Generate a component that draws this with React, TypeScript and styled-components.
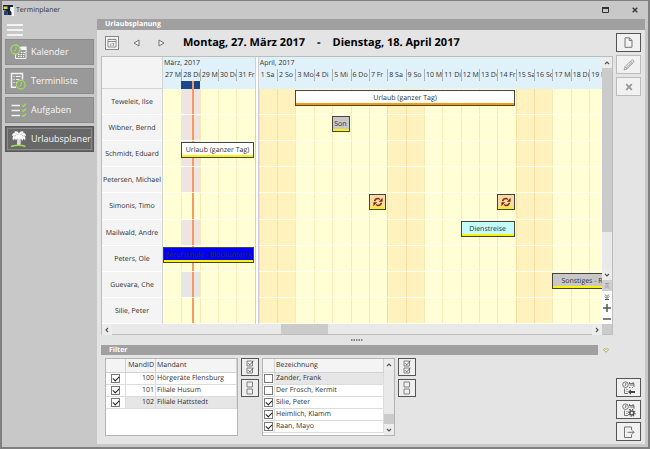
import React from "react";
import styled, { createGlobalStyle, css } from "styled-components";

const GlobalStyle = createGlobalStyle`
  * { box-sizing: border-box; }
  html, body, #root { height: 100%; margin: 0; }
  body { font: 7px/14px "Open Sans", "Noto Sans", sans-serif; color: #303030; overflow: hidden; text-rendering: geometricPrecision; }
  button { font: inherit; color: inherit; padding: 0; margin: 0; border: 0; background: none; }
  svg { display: block; flex: none; }
`;

/* ---------- window frame ---------- */

const Window = styled.div`
  display: flex;
  flex-direction: column;
  height: 100vh;
  background: #c8c8c8;
  border: 2px solid #808080;
  border-top-width: 1px;
`;

const TitleBar = styled.header`
  display: flex;
  align-items: center;
  height: 18px;
  flex: none;
  padding: 0 7px 0 1px;
  gap: 2px;
`;

const WindowTitle = styled.h1`
  flex: 1;
  margin: 0;
  padding-top: 2px;
  font-size: 7px;
  font-weight: 400;
`;

const WindowButton = styled.button`
  display: grid;
  place-items: center;
  width: 12px;
  height: 14px;
  margin-left: 16px;
`;

const Body = styled.div`
  display: flex;
  flex: 1;
  min-height: 0;
  padding: 0 3px 3px;
  gap: 3px;
`;

/* ---------- side navigation ---------- */

const Sidebar = styled.nav`
  display: flex;
  flex-direction: column;
  width: 89px;
  flex: none;
  gap: 3px;
`;

const MenuButton = styled.button`
  height: 17px;
  padding: 4px 0 0 2px;
  text-align: left;
`;

const NavButton = styled.button<{ $active?: boolean }>`
  display: flex;
  align-items: center;
  gap: 3px;
  height: 26px;
  padding-left: 4px;
  font-size: 9px;
  color: #f6f6f6;
  background: ${(p) => (p.$active ? "#686868" : "#999")};
  border: 1px solid ${(p) => (p.$active ? "#585858" : "#8c8c8c")};
  ${(p) =>
    p.$active &&
    css`
      outline: 1px solid #8a8a8a;
      outline-offset: -3px;
    `}
`;

/* ---------- content ---------- */

const Content = styled.main`
  display: flex;
  flex-direction: column;
  flex: 1;
  min-width: 0;
  background: #e4e4e4;
`;

const SectionBar = styled.h2`
  margin: 0;
  height: 11px;
  flex: none;
  padding-left: 8px;
  font-size: 7px;
  line-height: 12px;
  font-weight: 700;
  color: #fff;
  background: #a0a0a0;
`;

const Columns = styled.div`
  display: flex;
  flex: 1;
  min-height: 0;
  padding: 0 4px 3px;
  gap: 3px;
`;

const MainColumn = styled.div`
  display: flex;
  flex-direction: column;
  flex: 1;
  min-width: 0;
`;

const Actions = styled.aside`
  display: flex;
  flex-direction: column;
  width: 25px;
  flex: none;
  gap: 3px;
  padding-top: 3px;
`;

const Spacer = styled.div`
  flex: 1;
`;

const ActionButton = styled.button<{ $dim?: boolean }>`
  display: grid;
  place-items: center;
  height: 19px;
  background: #f1f1f1;
  border: 1px solid ${(p) => (p.$dim ? "#bcbcbc" : "#555")};
`;

const Toolbar = styled.div`
  display: flex;
  align-items: center;
  height: 26px;
  flex: none;
  padding-left: 4px;
`;

const CalendarButton = styled.button`
  display: grid;
  place-items: center;
  width: 14px;
  height: 14px;
  margin-right: 5px;
  background: #f3f3f3;
  border: 1px solid #888;
`;

const StepButton = styled.button`
  display: grid;
  place-items: center;
  width: 25px;
  height: 14px;
`;

const Period = styled.div`
  display: flex;
  gap: 12px;
  margin-left: 9px;
  font-size: 11px;
  line-height: 16px;
  font-weight: 700;
  color: #000;
  white-space: nowrap;
`;

/* ---------- schedule ---------- */

const Schedule = styled.section`
  display: grid;
  grid-template: minmax(0, 1fr) 10px / minmax(0, 1fr) 10px;
  flex: 1;
  min-height: 0;
  border: 1px solid #bdbdbd;
`;

const Planner = styled.div`
  display: flex;
  min-width: 0;
  background: #fffed5;
`;

const Column = styled.div<{ $grow?: number }>`
  display: flex;
  flex-direction: column;
  flex: ${(p) => p.$grow ?? 0} 0 0;
  min-width: 0;
  overflow: hidden;
`;

const ResourceColumn = styled.div`
  display: flex;
  flex-direction: column;
  width: 61px;
  flex: none;
  background: #f4f4f4;
  border-right: 1px solid #d4d4d4;
`;

const ResourceHead = styled.div`
  height: 32px;
  flex: none;
  border-bottom: 1px solid #d4d4d4;
`;

const Divider = styled.div`
  width: 4px;
  flex: none;
  background: #fff;
  border: solid #cfcfd8;
  border-width: 0 1px;
`;

const Rows = styled.div`
  display: grid;
  grid-template-rows: repeat(9, minmax(0, 1fr));
  flex: 1;
  min-height: 0;
`;

const Resource = styled.div`
  display: grid;
  place-items: center;
  padding-top: 3px;
  border-bottom: 1px solid #fff;
  white-space: nowrap;
`;

const MonthHead = styled.div`
  display: flex;
  flex-direction: column;
  height: 32px;
  flex: none;
  background: #e0f1fa;
`;

const MonthName = styled.div`
  height: 12px;
  padding-left: 1px;
`;

const DayGrid = styled.div<{ $columns: string }>`
  display: grid;
  grid-template-columns: ${(p) => p.$columns};
  grid-template-rows: minmax(0, 1fr);
  flex: 1;
  min-height: 0;
`;

const DayHead = styled.div`
  min-width: 0;
  display: flex;
  flex-direction: column;
`;

const DayLabel = styled.div<{ $first: boolean }>`
  height: 12px;
  padding-left: 1px;
  overflow: hidden;
  white-space: nowrap;
  border-left: 1px solid ${(p) => (p.$first ? "transparent" : "#a9b4ba")};
`;

const TodayMark = styled.div`
  flex: 1;
  padding-left: 11px;
  background: #1b468c;
`;

const NowLine = styled.div`
  width: 2px;
  height: 100%;
  background: #f79a62;
`;

const Lane = styled(DayGrid)`
  border-bottom: 1px solid #fffef3;
`;

const Cell = styled.div<{ $day: number; $weekend?: boolean; $busy?: string }>`
  grid-row: 1;
  grid-column: ${(p) => p.$day};
  background: ${(p) => p.$busy ?? (p.$weekend ? "#fff2bd" : "#fffed5")};
  border-left: 1px solid ${(p) => (p.$weekend ? "#f5dda4" : p.$day === 1 ? "transparent" : "#fbe8b8")};
`;

const NowCell = styled(Cell)`
  padding-left: 10px;
`;

const Event = styled.div<{ $from: number; $to: number; $fill: string; $strip: string; $align?: string; $open?: boolean }>`
  grid-row: 1;
  grid-column: ${(p) => p.$from} / ${(p) => p.$to};
  z-index: 1;
  display: flex;
  justify-content: ${(p) => p.$align ?? "center"};
  height: 16px;
  margin: 1px ${(p) => (p.$open ? 0 : 1)}px 0 0;
  padding: 0 ${(p) => (p.$open ? 0 : 1)}px 0 ${(p) => (p.$open ? 8 : 1)}px;
  overflow: hidden;
  white-space: nowrap;
  line-height: 16px;
  background: linear-gradient(to top, ${(p) => p.$strip} 2px, ${(p) => p.$fill} 2px);
  border: 1px solid #45453c;
  ${(p) => p.$open && "border-right: 0;"}
  svg {
    margin-top: 2px;
  }
`;

const EventText = styled.span<{ $clip?: boolean }>`
  ${(p) => p.$clip && "flex: 1; min-width: 0; overflow: hidden;"}
`;

const ScrollTrack = styled.div`
  display: flex;
  flex-direction: column;
  background: #e9e9e9;
`;

const ScrollTrackRow = styled.div`
  display: flex;
  background: #e9e9e9;
`;

const ScrollButton = styled.button<{ $bg?: string }>`
  display: grid;
  place-items: center;
  min-width: 10px;
  height: 11px;
  flex: none;
  background: ${(p) => p.$bg ?? "#ececec"};
`;

const Gap = styled.div<{ $grow: number }>`
  flex: ${(p) => p.$grow} 0 0;
`;

const Thumb = styled.div<{ $grow: number }>`
  flex: ${(p) => p.$grow} 0 0;
  background: #cbcbcb;
`;

const Corner = styled.div`
  background: #cbcbcb;
`;

const Splitter = styled.div`
  display: grid;
  place-items: center;
  height: 10px;
  flex: none;
`;

/* ---------- filter ---------- */

const FilterHead = styled.div`
  display: flex;
  align-items: center;
  flex: none;
`;

const FilterBar = styled(SectionBar)`
  flex: 1;
  height: 10px;
`;

const CollapseButton = styled.button`
  display: grid;
  place-items: center;
  width: 15px;
  height: 10px;
`;

const FilterBody = styled.div`
  display: flex;
  align-items: flex-start;
  flex: none;
  height: 86px;
  padding: 3px 4px 0;
`;

const ListBox = styled.div`
  display: flex;
  width: 133px;
  height: 78px;
  background: #fff;
  border: 1px solid #b4b4b4;
`;

const Table = styled.table`
  flex: 1;
  align-self: flex-start;
  border-collapse: separate;
  border-spacing: 0;
  table-layout: fixed;
  width: 100%;
`;

const Th = styled.th<{ $width?: number; $right?: boolean }>`
  width: ${(p) => (p.$width ? `${p.$width}px` : "auto")};
  height: 14px;
  padding: 0 1px;
  font-weight: 400;
  line-height: 13px;
  text-align: ${(p) => (p.$right ? "right" : "left")};
  background: #f4f4f4;
  border: solid #d2d2d2;
  border-width: 0 1px 1px 0;
`;

const Td = styled.td<{ $right?: boolean; $selected?: boolean }>`
  height: 12px;
  padding: 0 1px;
  line-height: 11px;
  white-space: nowrap;
  text-align: ${(p) => (p.$right ? "right" : "left")};
  background: ${(p) => (p.$selected ? "#e6e6e6" : "#fff")};
  border: solid #dcdcdc;
  border-width: 0 1px 1px 0;
`;

const CheckTd = styled(Td)`
  background: #fff;
`;

const Check = styled.input`
  appearance: none;
  display: grid;
  place-items: center;
  width: 9px;
  height: 9px;
  margin: 0 auto;
  background: #fff;
  border: 1px solid #777;
  &:checked::after {
    content: "";
    width: 5px;
    height: 3px;
    margin-top: -1px;
    border: solid #222;
    border-width: 0 0 1px 1px;
    transform: rotate(-45deg);
  }
`;

const ToggleStack = styled.div`
  display: flex;
  flex-direction: column;
  gap: 3px;
  margin: 0 3px;
`;

const ToggleButton = styled.button`
  display: grid;
  place-items: center;
  width: 18px;
  height: 18px;
  background: #efefef;
  border: 1px solid #555;
`;

/* ---------- icons ---------- */

const green = "#9fdc5a";

const LogoIcon = () => (
  <svg width="11" height="11" viewBox="0 0 11 11">
    <path d="M0 0h10v2H7.500L7 5l1.500 2v3H5L4 6 0 5z" fill="#10233f" />
    <path d="M.500 1.500h4V4h-4z" fill="#e6cf3c" />
    <path d="M7.500 2H11v9H8.500L9 8 7 5z" fill="#f8f8f8" />
    <path d="M1 6h3l1 4H1z" fill="#27406b" />
  </svg>
);

const Hamburger = () => (
  <svg width="16" height="12" viewBox="0 0 16 12" stroke="#fff" strokeWidth="1.400">
    <path d="M0 1h16M0 6h16M0 11h16" />
  </svg>
);

const CalendarNavIcon = () => (
  <svg width="18" height="16" viewBox="0 0 18 16" fill="none">
    <path d="M10 3.500h6v11H5.500v-4" stroke="#f4f4f4" />
    <path d="M10.500 2.500h6v3.500h-6z" fill="#f4f4f4" />
    <path d="M11 8.500h4.500M8 10.500h7.500M8 12.500h6" stroke="#f4f4f4" strokeDasharray="1.500 1" />
    <circle cx="5.500" cy="5.500" r="4.500" stroke={green} strokeWidth="1.300" />
    <path d="M6 2.500v3.500L4 7.500" stroke={green} />
  </svg>
);

const ListNavIcon = () => (
  <svg width="18" height="18" viewBox="0 0 18 18" fill="none">
    <path d="M6 15.200H1.500V1.500h11v6" stroke="#f4f4f4" strokeWidth="1.500" />
    <path d="M3.500 4.500h1.200M3.500 7.500h1.200M3.500 10.500h1.200M6 4.500h4.500M6 7.500h3.500M6 10.500h1" stroke="#f4f4f4" />
    <circle cx="10.800" cy="12.700" r="4.300" stroke={green} strokeWidth="1.300" />
    <path d="M11.300 10v3L9.300 14.500" stroke={green} />
  </svg>
);

const TasksNavIcon = () => (
  <svg width="18" height="14" viewBox="0 0 18 14" fill="none">
    <path d="M1.500 2.500H10M1.500 7.500H10M1.500 12.500H10" stroke="#f4f4f4" strokeWidth="1.300" />
    <path d="M12 2l1.500 1.300L16 .8M12 7l1.500 1.300L16 5.800M12 12l1.500 1.300L16 10.800" stroke={green} strokeWidth="1.400" />
  </svg>
);

const PalmNavIcon = () => (
  <svg width="18" height="18" viewBox="0 0 18 18">
    <path
      d="M9 3.500Q7.500.500 4.500 1.500L5 2.500Q2 3 2 6l1.500-.5Q2 7.500 3 10.500l1.500-2L5 10.500l1-2v2l1.300-2.500Q7.200 10 7 15.500h3.500Q11 10 10.300 8l1 2.500.200-2 1 2.500 1-2.500 1.500 2q1-3-.5-5L16 6q0-3-3-3.500l.500-1Q10 .500 9 3.500z"
      fill="#fafafa"
    />
    <path d="M1 16.500q8-2.500 14.500 0" stroke={green} strokeWidth="1.500" fill="none" />
    <path d="M7.500 10h3M7.300 12h3.200M7.200 14h3.300M6 3.500L7.500 5M12 3.500L10.500 5M4.500 6L6 5.500M13.500 6L12 5.500" stroke="#777" strokeWidth=".500" />
  </svg>
);

const MaximizeIcon = () => (
  <svg width="7" height="6" viewBox="0 0 7 6">
    <path d="M.5.500h6v5h-6z" fill="none" stroke="#333" />
    <path d="M0 0h7v2H0z" fill="#333" />
  </svg>
);

const CloseIcon = () => (
  <svg width="6" height="6" viewBox="0 0 6 6">
    <path d="M.7.700l4.600 4.600M5.300.700L.7 5.300" stroke="#333" strokeWidth="1.300" />
  </svg>
);

const TodayIcon = () => (
  <svg width="10" height="10" viewBox="0 0 10 10" fill="none" stroke="#777">
    <path d="M1 1.500h8v7.500H1zM1 3.500h8" strokeWidth=".8" />
    <path d="M3 .500v1.500M7 .500v1.500M3.800 5.500v2.500M5.500 5.500h1.200L6 8" strokeWidth=".8" />
  </svg>
);

const StepIcon = ({ back }: { back?: boolean }) => (
  <svg width="7" height="8" viewBox="0 0 7 8">
    <path d={back ? "M6 1v6L1 4z" : "M1 1v6l5-3z"} fill="#f2f2f2" stroke="#666" strokeWidth=".9" />
  </svg>
);

const FileIcon = () => (
  <svg width="9" height="11" viewBox="0 0 9 11" fill="none" stroke="#777">
    <path d="M1 .8h4.500L8 3.300v7H1zM5.300.800v2.700H8" />
  </svg>
);

const PencilIcon = () => (
  <svg width="12" height="12" viewBox="0 0 12 12" fill="#e2e2e2" stroke="#999" strokeWidth=".8">
    <path d="M1 11l1-3.300L8.500 1.200q1.300-.8 2 0t0 2.200L4.200 10zM2 7.700L4.200 10M7.300 2.400l2.200 2.200M3.300 9l5.500-5.500" />
  </svg>
);

const DeleteIcon = () => (
  <svg width="8" height="8" viewBox="0 0 8 8">
    <path d="M1.200 1.200l5.600 5.600M6.800 1.200L1.200 6.800" stroke="#999" strokeWidth="1.900" />
  </svg>
);

const ClockCalendar = () => (
  <>
    <circle cx="3.500" cy="3.700" r="2.800" />
    <path d="M3.800 2v2L2.800 5M7 2.500h5v3.500M7.500 4h4.500M7.500 2.500V1M11 2.500V1M2.500 7.500v5H6M4.500 8.500h1M4.500 10.500h1M7 6.500h1.500M10 6.500h1" />
  </>
);

const CalendarBackIcon = () => (
  <svg width="14" height="14" viewBox="0 0 14 14" fill="none" stroke="#666" strokeWidth=".9">
    <ClockCalendar />
    <path d="M6 11L9 8.200v1.900h4v1.800H9v1.900z" fill="#444" stroke="none" />
  </svg>
);

const CalendarGearIcon = () => (
  <svg width="14" height="14" viewBox="0 0 14 14" fill="none" stroke="#666" strokeWidth=".9">
    <ClockCalendar />
    <circle cx="9.800" cy="10" r="2" stroke="#555" strokeWidth="1.600" />
    <circle cx="9.800" cy="10" r="3.200" stroke="#555" strokeWidth="1.200" strokeDasharray="1.250 1.250" />
  </svg>
);

const ExitIcon = () => (
  <svg width="12" height="12" viewBox="0 0 12 12" fill="none" stroke="#666">
    <path d="M8.500 4V1H1.500v10.500h7V8.500M4.500 6.300h6.500M9 4.300l2 2-2 2" strokeWidth=".9" />
  </svg>
);

const Chevron = ({ dir }: { dir: "up" | "down" | "left" | "right" }) => {
  const d = { up: "M1 4l2-2 2 2", down: "M1 2l2 2 2-2", left: "M4 1L2 3l2 2", right: "M2 1l2 2-2 2" }[dir];
  return (
    <svg width="6" height="6" viewBox="0 0 6 6">
      <path d={d} fill="none" stroke="#555" strokeWidth="1.200" />
    </svg>
  );
};

const PageIcon = ({ up }: { up?: boolean }) => (
  <svg width="6" height="6" viewBox="0 0 6 6" fill="none" stroke={up ? "#999" : "#444"}>
    <path d={up ? "M1 .500h4M1 3.500l2-2 2 2M1 5.500l2-2 2 2" : "M1 .5l2 2 2-2M1 2.500l2 2 2-2M1 5.500h4"} strokeWidth=".9" />
  </svg>
);

const PlusMinus = ({ plus }: { plus?: boolean }) => (
  <svg width="8" height="8" viewBox="0 0 8 8">
    <path d={plus ? "M0 4h8M4 0v8" : "M0 4h8"} stroke="#555" strokeWidth="1.500" />
  </svg>
);

const GripIcon = () => (
  <svg width="12" height="2" viewBox="0 0 12 2">
    <path d="M0 1h12" stroke="#666" strokeWidth="1.300" strokeDasharray="1.500 1" />
  </svg>
);

const CollapseIcon = () => (
  <svg width="6" height="5" viewBox="0 0 6 5">
    <path d="M.5 1.500L1.700.700 3 1.500 4.300.700 5.500 1.500 3 4.300z" fill="#fffbe0" stroke="#a39c5c" strokeWidth=".8" />
  </svg>
);

const CycleIcon = () => (
  <svg width="10" height="10" viewBox="0 0 10 10" fill="none" stroke="#7c2c0c" strokeWidth="1.400">
    <path d="M1.500 4.200Q2.500 1.300 5.200 1.500L7 2.500M8.500 5.800Q7.500 8.700 4.800 8.500L3 7.500" />
    <path d="M9.600.800v3.900H5.800zM.4 9.200V5.300h3.800z" fill="#7c2c0c" stroke="none" />
  </svg>
);

const BoxesIcon = ({ checked }: { checked?: boolean }) => (
  <svg width="8" height="14" viewBox="0 0 8 14" fill="none" stroke="#777" strokeWidth=".9">
    <path d="M1 1h5.500v5H1zM1 8h5.500v5H1z" />
    {checked && <path d="M2.200 3.300l1.500 1.500L7.500 1M2.200 10.300l1.500 1.500L7.500 8" stroke="#555" />}
  </svg>
);

/* ---------- data ---------- */

interface Booking {
  row: number;
  from: number;
  to: number;
  fill: string;
  strip: string;
  text?: string;
  align?: "start" | "center";
  open?: boolean;
}

const resources = [
  "Teweleit, Ilse",
  "Wibner, Bernd",
  "Schmidt, Eduard",
  "Petersen, Michael",
  "Simonis, Timo",
  "Mailwald, Andre",
  "Peters, Ole",
  "Guevara, Che",
  "Silie, Peter",
];

const todayShade: Record<number, string> = {
  0: "#eee5e3",
  1: "#eee5e3",
  2: "#eee5e3",
  3: "#eee5e3",
  5: "#eee5e3",
  7: "#e6e6e6",
};

const yellow = "#fbf200";

const months = [
  {
    name: "März, 2017",
    grow: 50,
    columns: "repeat(5, minmax(0, 1fr))",
    days: ["27 Mo", "28 Di", "29 Mi", "30 Do", "31 Fr"],
    today: 1,
    bookings: [
      { row: 2, from: 2, to: 6, fill: "#fff", strip: yellow, text: "Urlaub (ganzer Tag)" },
      { row: 6, from: 1, to: 6, fill: "#0000fb", strip: yellow, text: "Berufschule - Blockunterricht", align: "start" },
    ] as Booking[],
  },
  {
    name: "April, 2017",
    grow: 187,
    columns: "repeat(18, minmax(0, 10fr)) minmax(0, 7fr)",
    days: [
      "1 Sa", "2 So", "3 Mo", "4 Di", "5 Mi", "6 Do", "7 Fr", "8 Sa", "9 So", "10 Mo",
      "11 Di", "12 Mi", "13 Do", "14 Fr", "15 Sa", "16 So", "17 Mo", "18 Di", "19 Mi",
    ],
    today: -1,
    bookings: [
      { row: 0, from: 3, to: 15, fill: "#fff", strip: "#ff9900", text: "Urlaub (ganzer Tag)" },
      { row: 1, from: 5, to: 6, fill: "#c8c8c8", strip: yellow, text: "Son", align: "start" },
      { row: 4, from: 7, to: 8, fill: "#fbd9a8", strip: yellow },
      { row: 4, from: 14, to: 15, fill: "#fbd9a8", strip: yellow },
      { row: 5, from: 12, to: 15, fill: "#c4fbfb", strip: yellow, text: "Dienstreise" },
      { row: 7, from: 17, to: 20, fill: "#c8c8c8", strip: yellow, text: "Sonstiges - R", align: "start", open: true },
    ] as Booking[],
  },
];

const clients = [
  { id: 100, name: "Hörgeräte Flensburg" },
  { id: 101, name: "Filiale Husum" },
  { id: 102, name: "Filiale Hattstedt", selected: true },
];

const people = [
  { name: "Zander, Frank", checked: false, selected: true },
  { name: "Der Frosch, Kermit", checked: false },
  { name: "Silie, Peter", checked: true },
  { name: "Heimlich, Klamm", checked: true },
  { name: "Raan, Mayo", checked: true },
];

const Month = ({ month }: { month: (typeof months)[number] }) => (
  <Column $grow={month.grow}>
    <MonthHead>
      <MonthName>{month.name}</MonthName>
      <DayGrid $columns={month.columns}>
        {month.days.map((day, i) => (
          <DayHead key={day}>
            <DayLabel $first={i === 0}>{day}</DayLabel>
            {i === month.today && (
              <TodayMark>
                <NowLine />
              </TodayMark>
            )}
          </DayHead>
        ))}
      </DayGrid>
    </MonthHead>
    <Rows>
      {resources.map((resource, row) => (
        <Lane key={resource} $columns={month.columns}>
          {month.days.map((day, i) =>
            i === month.today ? (
              <NowCell key={day} $day={i + 1} $busy={todayShade[row]}>
                <NowLine />
              </NowCell>
            ) : (
              <Cell key={day} $day={i + 1} $weekend={/S[ao]/.test(day)} />
            )
          )}
          {month.bookings
            .filter((b) => b.row === row)
            .map((b) => (
              <Event key={b.from} $from={b.from} $to={b.to} $fill={b.fill} $strip={b.strip} $align={b.align} $open={b.open}>
                {b.text ? <EventText $clip={b.align === "start"}>{b.text}</EventText> : <CycleIcon />}
              </Event>
            ))}
        </Lane>
      ))}
    </Rows>
  </Column>
);

const Toggles = () => (
  <ToggleStack>
    <ToggleButton aria-label="Alle auswählen">
      <BoxesIcon checked />
    </ToggleButton>
    <ToggleButton aria-label="Keine auswählen">
      <BoxesIcon />
    </ToggleButton>
  </ToggleStack>
);

export default function App() {
  return (
    <>
      <GlobalStyle />
      <Window>
        <TitleBar>
          <LogoIcon />
          <WindowTitle>Terminplaner</WindowTitle>
          <WindowButton aria-label="Maximieren">
            <MaximizeIcon />
          </WindowButton>
          <WindowButton aria-label="Schließen">
            <CloseIcon />
          </WindowButton>
        </TitleBar>
        <Body>
          <Sidebar>
            <MenuButton aria-label="Menü">
              <Hamburger />
            </MenuButton>
            <NavButton>
              <CalendarNavIcon />
              Kalender
            </NavButton>
            <NavButton>
              <ListNavIcon />
              Terminliste
            </NavButton>
            <NavButton>
              <TasksNavIcon />
              Aufgaben
            </NavButton>
            <NavButton $active aria-current="page">
              <PalmNavIcon />
              Urlaubsplaner
            </NavButton>
          </Sidebar>
          <Content>
            <SectionBar>Urlaubsplanung</SectionBar>
            <Columns>
              <MainColumn>
                <Toolbar>
                  <CalendarButton aria-label="Datum wählen">
                    <TodayIcon />
                  </CalendarButton>
                  <StepButton aria-label="Zurück">
                    <StepIcon back />
                  </StepButton>
                  <StepButton aria-label="Weiter">
                    <StepIcon />
                  </StepButton>
                  <Period>
                    <span>Montag, 27. März 2017</span>
                    <span>-</span>
                    <span>Dienstag, 18. April 2017</span>
                  </Period>
                </Toolbar>
                <Schedule>
                  <Planner>
                    <ResourceColumn>
                      <ResourceHead />
                      <Rows>
                        {resources.map((r) => (
                          <Resource key={r}>{r}</Resource>
                        ))}
                      </Rows>
                    </ResourceColumn>
                    <Month month={months[0]} />
                    <Divider />
                    <Month month={months[1]} />
                  </Planner>
                  <ScrollTrack>
                    <ScrollButton aria-label="Nach oben">
                      <Chevron dir="up" />
                    </ScrollButton>
                    <Thumb $grow={162} />
                    <Gap $grow={37} />
                    <ScrollButton aria-label="Nach unten">
                      <Chevron dir="down" />
                    </ScrollButton>
                    <ScrollButton $bg="#d0d0d0" aria-label="Seite nach oben">
                      <PageIcon up />
                    </ScrollButton>
                    <ScrollButton $bg="#fff" aria-label="Seite nach unten">
                      <PageIcon />
                    </ScrollButton>
                    <ScrollButton $bg="#fff" aria-label="Vergrößern">
                      <PlusMinus plus />
                    </ScrollButton>
                    <ScrollButton $bg="#fff" aria-label="Verkleinern">
                      <PlusMinus />
                    </ScrollButton>
                  </ScrollTrack>
                  <ScrollTrackRow>
                    <ScrollButton aria-label="Nach links">
                      <Chevron dir="left" />
                    </ScrollButton>
                    <Gap $grow={169} />
                    <Thumb $grow={47} />
                    <Gap $grow={263} />
                    <ScrollButton aria-label="Nach rechts">
                      <Chevron dir="right" />
                    </ScrollButton>
                  </ScrollTrackRow>
                  <Corner />
                </Schedule>
                <Splitter>
                  <GripIcon />
                </Splitter>
                <FilterHead>
                  <FilterBar>Filter</FilterBar>
                  <CollapseButton aria-label="Filter einklappen">
                    <CollapseIcon />
                  </CollapseButton>
                </FilterHead>
                <FilterBody>
                  <ListBox>
                    <Table>
                      <thead>
                        <tr>
                          <Th $width={20} />
                          <Th $width={30} $right>MandID</Th>
                          <Th>Mandant</Th>
                        </tr>
                      </thead>
                      <tbody>
                        {clients.map((c) => (
                          <tr key={c.id}>
                            <CheckTd>
                              <Check type="checkbox" defaultChecked aria-label={c.name} />
                            </CheckTd>
                            <Td $right $selected={c.selected}>{c.id}</Td>
                            <Td $selected={c.selected}>{c.name}</Td>
                          </tr>
                        ))}
                      </tbody>
                    </Table>
                  </ListBox>
                  <Toggles />
                  <ListBox>
                    <Table>
                      <thead>
                        <tr>
                          <Th $width={12} />
                          <Th>Bezeichnung</Th>
                        </tr>
                      </thead>
                      <tbody>
                        {people.map((p) => (
                          <tr key={p.name}>
                            <CheckTd>
                              <Check type="checkbox" defaultChecked={p.checked} aria-label={p.name} />
                            </CheckTd>
                            <Td $selected={p.selected}>{p.name}</Td>
                          </tr>
                        ))}
                      </tbody>
                    </Table>
                    <ScrollTrack>
                      <ScrollButton aria-label="Nach oben">
                        <Chevron dir="up" />
                      </ScrollButton>
                      <Gap $grow={45} />
                      <Thumb $grow={10} />
                      <ScrollButton aria-label="Nach unten">
                        <Chevron dir="down" />
                      </ScrollButton>
                    </ScrollTrack>
                  </ListBox>
                  <Toggles />
                </FilterBody>
              </MainColumn>
              <Actions>
                <ActionButton aria-label="Neu">
                  <FileIcon />
                </ActionButton>
                <ActionButton $dim aria-label="Bearbeiten">
                  <PencilIcon />
                </ActionButton>
                <ActionButton $dim aria-label="Löschen">
                  <DeleteIcon />
                </ActionButton>
                <Spacer />
                <ActionButton aria-label="Kalender laden">
                  <CalendarBackIcon />
                </ActionButton>
                <ActionButton aria-label="Kalender einrichten">
                  <CalendarGearIcon />
                </ActionButton>
                <ActionButton aria-label="Beenden">
                  <ExitIcon />
                </ActionButton>
              </Actions>
            </Columns>
          </Content>
        </Body>
      </Window>
    </>
  );
}
